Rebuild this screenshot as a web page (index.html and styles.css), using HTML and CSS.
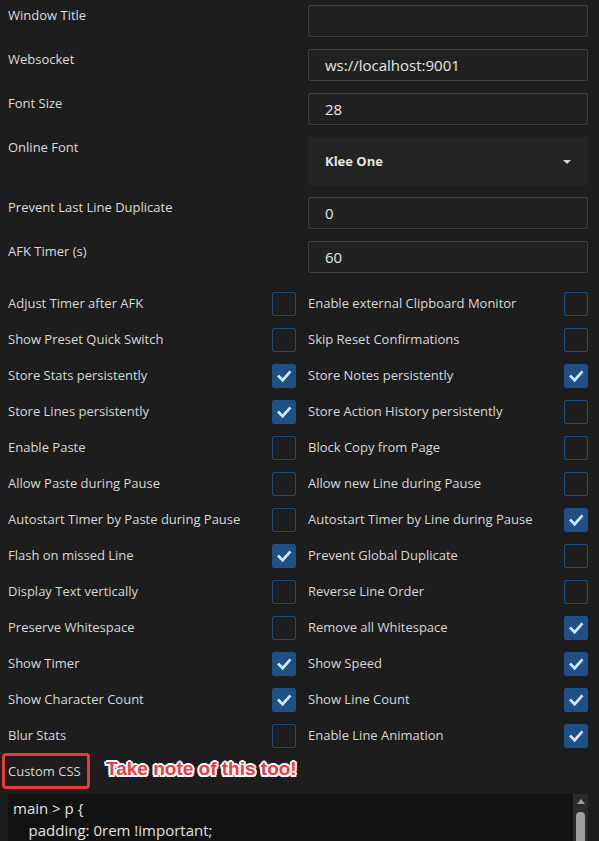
FILE: index.html
```html
<!DOCTYPE html>
<html>
<head>
<meta charset="utf-8">
<link rel="stylesheet" href="styles.css">
</head>
<body>
<main class="settings">
  <section class="fields">
    <label class="field-label">Window Title</label>
    <input class="text-input" type="text" value="">
    <label class="field-label">Websocket</label>
    <input class="text-input" type="text" value="ws://localhost:9001">
    <label class="field-label">Font Size</label>
    <input class="text-input" type="text" value="28">
    <label class="field-label">Online Font</label>
    <div class="select"><span>Klee One</span><span class="caret"></span></div>
    <label class="field-label">Prevent Last Line Duplicate</label>
    <input class="text-input" type="text" value="0">
    <label class="field-label">AFK Timer (s)</label>
    <input class="text-input" type="text" value="60">
  </section>

  <section class="checks">
    <span class="check-label">Adjust Timer after AFK</span><span class="box"></span>
    <span class="check-label">Enable external Clipboard Monitor</span><span class="box"></span>

    <span class="check-label">Show Preset Quick Switch</span><span class="box"></span>
    <span class="check-label">Skip Reset Confirmations</span><span class="box"></span>

    <span class="check-label">Store Stats persistently</span><span class="box on"><svg viewBox="0 0 24 24"><path d="M6.5 12.5l4 4 7.5-8.5"/></svg></span>
    <span class="check-label">Store Notes persistently</span><span class="box on"><svg viewBox="0 0 24 24"><path d="M6.5 12.5l4 4 7.5-8.5"/></svg></span>

    <span class="check-label">Store Lines persistently</span><span class="box on"><svg viewBox="0 0 24 24"><path d="M6.5 12.5l4 4 7.5-8.5"/></svg></span>
    <span class="check-label">Store Action History persistently</span><span class="box"></span>

    <span class="check-label">Enable Paste</span><span class="box"></span>
    <span class="check-label">Block Copy from Page</span><span class="box"></span>

    <span class="check-label">Allow Paste during Pause</span><span class="box"></span>
    <span class="check-label">Allow new Line during Pause</span><span class="box"></span>

    <span class="check-label">Autostart Timer by Paste during Pause</span><span class="box"></span>
    <span class="check-label">Autostart Timer by Line during Pause</span><span class="box on"><svg viewBox="0 0 24 24"><path d="M6.5 12.5l4 4 7.5-8.5"/></svg></span>

    <span class="check-label">Flash on missed Line</span><span class="box on"><svg viewBox="0 0 24 24"><path d="M6.5 12.5l4 4 7.5-8.5"/></svg></span>
    <span class="check-label">Prevent Global Duplicate</span><span class="box"></span>

    <span class="check-label">Display Text vertically</span><span class="box"></span>
    <span class="check-label">Reverse Line Order</span><span class="box"></span>

    <span class="check-label">Preserve Whitespace</span><span class="box"></span>
    <span class="check-label">Remove all Whitespace</span><span class="box on"><svg viewBox="0 0 24 24"><path d="M6.5 12.5l4 4 7.5-8.5"/></svg></span>

    <span class="check-label">Show Timer</span><span class="box on"><svg viewBox="0 0 24 24"><path d="M6.5 12.5l4 4 7.5-8.5"/></svg></span>
    <span class="check-label">Show Speed</span><span class="box on"><svg viewBox="0 0 24 24"><path d="M6.5 12.5l4 4 7.5-8.5"/></svg></span>

    <span class="check-label">Show Character Count</span><span class="box on"><svg viewBox="0 0 24 24"><path d="M6.5 12.5l4 4 7.5-8.5"/></svg></span>
    <span class="check-label">Show Line Count</span><span class="box on"><svg viewBox="0 0 24 24"><path d="M6.5 12.5l4 4 7.5-8.5"/></svg></span>

    <span class="check-label">Blur Stats</span><span class="box"></span>
    <span class="check-label">Enable Line Animation</span><span class="box on"><svg viewBox="0 0 24 24"><path d="M6.5 12.5l4 4 7.5-8.5"/></svg></span>
  </section>

  <section class="css-section">
    <div class="css-label">
      <span class="css-title">Custom CSS</span>
      <span class="note">Take note of this too!</span>
    </div>
    <div class="code-area">
      <pre class="code">main &gt; p {
    padding: 0rem !important;</pre>
      <div class="scrollbar">
        <span class="arrow-up"></span>
        <span class="thumb"></span>
      </div>
    </div>
  </section>
</main>
</body>
</html>
```

FILE: styles.css
```css
* { box-sizing: border-box; }

html, body {
  margin: 0;
  height: 100%;
  overflow: hidden;
  background: #1d1d1d;
}

body {
  font-family: "Open Sans", "Noto Sans", sans-serif;
  font-size: 13px;
  color: #d8d8d8;
}

.settings {
  padding: 5px 11px 0 8px;
}

.fields {
  display: grid;
  grid-template-columns: 300px 280px;
  row-gap: 12px;
}

.field-label {
  line-height: 18px;
  padding-top: 1px;
  color: #dcdcdc;
}

.text-input {
  height: 32px;
  width: 280px;
  background: #212121;
  border: 1px solid #3e3e3e;
  border-radius: 2px;
  color: #e6e6e6;
  font-family: "Open Sans", "Noto Sans", sans-serif;
  font-size: 15px;
  padding: 0 16px;
  outline: none;
}

.select {
  height: 48px;
  background: #232323;
  display: flex;
  align-items: center;
  justify-content: space-between;
  padding: 0 17px 0 17px;
  font-weight: 700;
  font-size: 13px;
  color: #e4e4e4;
}

.caret {
  width: 0;
  height: 0;
  border-left: 4px solid transparent;
  border-right: 4px solid transparent;
  border-top: 4px solid #d8d8d8;
  margin-top: 2px;
}

.checks {
  margin-top: 19px;
  display: grid;
  grid-template-columns: 264px 36px 256px 24px;
  grid-auto-rows: 24px;
  row-gap: 12px;
  align-items: center;
}

.check-label {
  white-space: nowrap;
  color: #d8d8d8;
  line-height: 18px;
  margin-top: -2px;
}

.box {
  width: 24px;
  height: 24px;
  border: 1px solid #1d4c7b;
  border-radius: 2px;
  display: flex;
  align-items: center;
  justify-content: center;
}

.box.on {
  background: #1f4f85;
  border-color: #1f4f85;
}

.box svg {
  width: 22px;
  height: 22px;
  fill: none;
  stroke: #cfe6ff;
  stroke-width: 3;
  stroke-linecap: square;
  stroke-linejoin: miter;
}

.css-section {
  margin-top: 7px;
}

.css-label {
  position: relative;
  height: 29px;
  display: flex;
  align-items: center;
  padding-top: 2px;
}

.css-title {
  position: relative;
  color: #d8d8d8;
}

.css-title::before {
  content: "";
  position: absolute;
  left: -6px;
  right: -9px;
  top: -9px;
  bottom: -9px;
  border: 3px solid #e8393f;
  border-radius: 4px;
}

.note {
  position: absolute;
  left: 98px;
  top: 3px;
  font-family: "Liberation Sans", Arial, sans-serif;
  font-weight: 700;
  font-size: 19px;
  color: #ee3a40;
  text-shadow:
    -1.5px -1.5px 0 #fff, 1.5px -1.5px 0 #fff,
    -1.5px 1.5px 0 #fff, 1.5px 1.5px 0 #fff,
    0 -2px 0 #fff, 0 2px 0 #fff, -2px 0 0 #fff, 2px 0 0 #fff;
}

.code-area {
  margin-top: 10px;
  display: flex;
  width: 580px;
  height: 120px;
  background: #121212;
}

.code {
  flex: 1;
  margin: 0;
  padding: 3px 5px 0;
  font-family: "Open Sans", "Noto Sans", sans-serif;
  font-size: 15px;
  line-height: 22px;
  color: #e2e2e2;
  white-space: pre;
}

.scrollbar {
  width: 15px;
  background: #2b2b2b;
  display: flex;
  flex-direction: column;
  align-items: center;
  padding-top: 5px;
}

.arrow-up {
  width: 0;
  height: 0;
  border-left: 4px solid transparent;
  border-right: 4px solid transparent;
  border-bottom: 5px solid #9e9e9e;
}

.thumb {
  margin-top: 8px;
  width: 9px;
  height: 80px;
  border-radius: 4px;
  background: #9e9e9e;
}
```
